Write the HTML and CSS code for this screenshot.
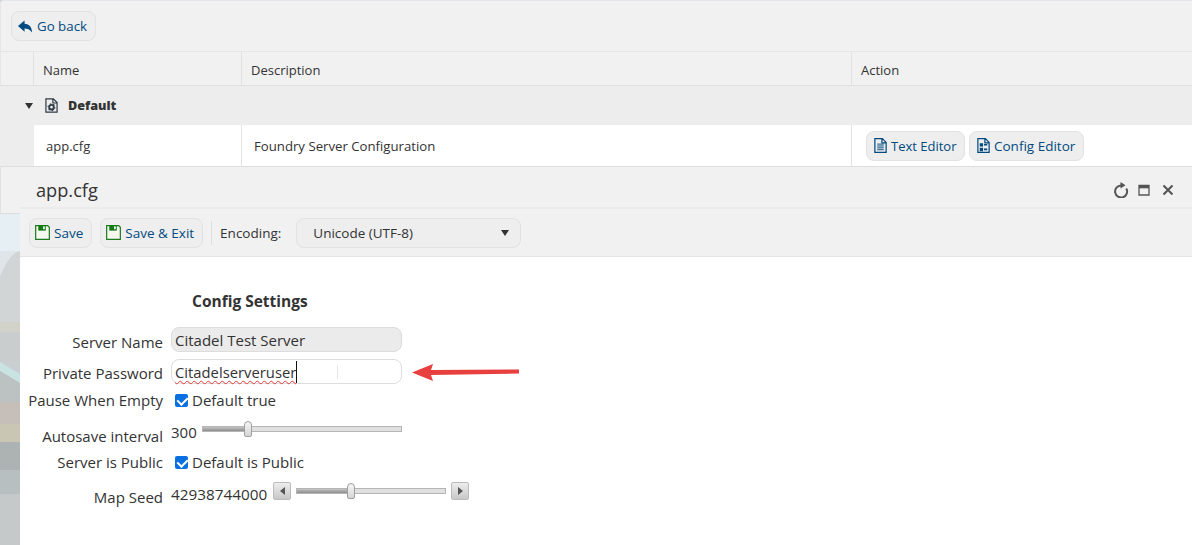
FILE: index.html
```html
<!DOCTYPE html>
<html lang="en">
<head>
<meta charset="utf-8">
<title>app.cfg</title>
<link rel="stylesheet" href="styles.css">
</head>
<body>
<div class="backdrop">
  <svg class="scene" viewBox="0 0 20 378" preserveAspectRatio="none" aria-hidden="true">
    <rect width="20" height="378" fill="#c9ced1"/>
    <rect y="0" width="20" height="46" fill="#f1f1f1"/>
    <rect y="46" width="20" height="1" fill="#dcdcdc"/>
    <rect y="47" width="20" height="37" fill="#e6eff4"/>
    <path d="M0 84V110Q10 86 20 84z" fill="#dfe5e8"/>
    <path d="M0 110Q10 86 20 84V155H0z" fill="#d2d5d6"/>
    <rect y="155" width="20" height="10" fill="#d3d2ca"/>
    <rect y="165" width="20" height="30" fill="#c9cdcd"/>
    <path d="M0 195 20 207V216L0 204z" fill="#c9e2e2"/>
    <path d="M0 204 20 216V235H0z" fill="#bcc2c2"/>
    <rect y="235" width="20" height="22" fill="#c6bfb9"/>
    <rect y="257" width="20" height="18" fill="#c9c6b4"/>
    <rect y="275" width="20" height="28" fill="#adb3b3"/>
    <rect y="303" width="20" height="24" fill="#b8bfc0"/>
    <rect y="327" width="20" height="51" fill="#c5c9c9"/>
    <rect x="0" y="0" width="1" height="46" fill="#e2e2e2"/>
  </svg>
</div>
<div class="page">
  <section class="list">
    <div class="topbar">
      <button class="btn back">
        <svg class="ico" viewBox="0 0 16 16"><path d="M7 1.500 0 7.500 7 13.500V10c3 0 5.600 .8 8 4.500C15 8.500 12 5.200 7 5z" fill="#004a7f"/></svg>
        Go back
      </button>
    </div>
    <div class="row head">
      <div class="c-gut"></div>
      <div class="c-name">Name</div>
      <div class="c-desc">Description</div>
      <div class="c-act">Action</div>
    </div>
    <div class="group">
      <span class="tri"></span>
      <svg class="ico file" viewBox="0 0 14 16"><path d="M1 .8h8l4 4v10.400H1zM8.500 .8v4.500H13" fill="none" stroke="#2f3b46" stroke-width="1.300"/><circle cx="7" cy="9.800" r="2.500" fill="none" stroke="#2f3b46" stroke-width="2"/><circle cx="7" cy="9.800" r="3.700" fill="none" stroke="#2f3b46" stroke-width="1.100" stroke-dasharray="1.500 2.300"/></svg>
      <b>Default</b>
    </div>
    <div class="row item">
      <div class="c-gut"></div>
      <div class="c-name in">app.cfg</div>
      <div class="c-desc in">Foundry Server Configuration</div>
      <div class="c-act btns">
        <button class="btn btn-text">
          <svg class="ico" viewBox="0 0 14 16"><path d="M1 .7h8l4 4v10.600H1zM8.500 .7v4.500H13" fill="none" stroke="#004a7f" stroke-width="1.300"/><path d="M3.500 6.500h7M3.500 8.500h7M3.500 10.500h7M3.500 12.500h7" stroke="#004a7f"/></svg>
          Text Editor
        </button>
        <button class="btn btn-cfg">
          <svg class="ico" viewBox="0 0 14 16"><path d="M1 .7h8l4 4v10.600H1zM8.500 .7v4.500H13" fill="none" stroke="#004a7f" stroke-width="1.300"/><path d="M3 5.500h3.500v3.500H3zM3 10.500h3.500V14H3z" fill="#004a7f"/><path d="M7.500 7.200h3.500M7.500 12.200h3.500" stroke="#004a7f" stroke-width="1.800"/></svg>
          Config Editor
        </button>
      </div>
    </div>
  </section>

  <section class="win">
    <header class="win-title">
      <span class="win-name">app.cfg</span>
      <div class="win-ctl">
        <svg class="ctl refresh" viewBox="0 0 16 16"><path d="M13.300 6.500A6 6 0 1 1 8 3.500" fill="none" stroke="#555" stroke-width="2"/><path d="M7.500 0 12.500 3.300 7.500 6.600z" fill="#555"/></svg>
        <svg class="ctl small" viewBox="0 0 12 12"><path d="M1 1.500h10v9.500H1z" fill="none" stroke="#555" stroke-width="1.300"/><path d="M1 3h10" stroke="#555" stroke-width="2.600"/></svg>
        <svg class="ctl small" viewBox="0 0 12 12"><path d="M1.500 1.500l9 9M10.500 1.500l-9 9" stroke="#555" stroke-width="2.100"/></svg>
      </div>
    </header>
    <div class="toolbar">
      <button class="btn tb">
        <svg class="ico" viewBox="0 0 16 16"><path d="M.7 .7h12.800l1.800 1.800v12.800H.7z" fill="#f4f8ee" stroke="#1f7a1f" stroke-width="1.300"/><path d="M3.500 .5h8v5.500h-8z" fill="#127a12"/><rect x="8.500" y="1.500" width="2" height="3" fill="#dfe"/></svg>
        Save
      </button>
      <button class="btn tb">
        <svg class="ico" viewBox="0 0 16 16"><path d="M.7 .7h12.800l1.800 1.800v12.800H.7z" fill="#f4f8ee" stroke="#1f7a1f" stroke-width="1.300"/><path d="M3.500 .5h8v5.500h-8z" fill="#127a12"/><rect x="8.500" y="1.500" width="2" height="3" fill="#dfe"/></svg>
        Save &amp; Exit
      </button>
      <span class="sep"></span>
      <span class="enc-label">Encoding:</span>
      <div class="select"><span>Unicode (UTF-8)</span><i class="tri"></i></div>
    </div>
    <div class="body">
      <h3>Config Settings</h3>
      <div class="form">
        <div class="f r1"><label>Server Name</label><div class="input ro">Citadel Test Server</div></div>
        <div class="f r2">
          <label>Private Password</label>
          <div class="input focus"><span class="typed">Citadelserveruser</span><i class="ibeam"></i></div>
          <svg class="arrow" viewBox="0 0 108 18"><path d="M0 9.500 21 1 19 7 107 6.500V10.500L19 12 21 18z" fill="#e8403f"/></svg>
        </div>
        <div class="f r3"><label>Pause When Empty</label><span class="chk"></span><span>Default true</span></div>
        <div class="f r4"><label>Autosave interval</label><span class="val">300</span><div class="slider s1"><i class="fill"></i><i class="thumb"></i></div></div>
        <div class="f r5"><label>Server is Public</label><span class="chk"></span><span>Default is Public</span></div>
        <div class="f r6"><label>Map Seed</label><span class="val num">42938744000</span>
          <span class="step"><i class="l"></i></span>
          <div class="slider s2"><i class="fill"></i><i class="thumb"></i></div>
          <span class="step"><i class="r"></i></span>
        </div>
      </div>
    </div>
  </section>
</div>
</body>
</html>
```

FILE: styles.css
```css
* { box-sizing: border-box; }
html, body { margin: 0; height: 100%; }
body {
  width: 1192px; height: 545px; overflow: hidden; position: relative;
  font-family: "Open Sans", "Noto Sans", sans-serif;
  font-size: 13px; color: #333; background: #cdd2d5;
}
.backdrop { position: absolute; left: 0; top: 167px; width: 20px; height: 378px; }
.scene { width: 100%; height: 100%; display: block; }
.page { position: relative; display: flex; flex-direction: column; height: 545px; }
.list {
  height: 167px; background: #f1f1f1; border-top: 1px solid #e3e6ea; border-left: 1px solid #e6e6e6;
  border-bottom: 1px solid #dedede; border-radius: 4px 0 0 0;
}
.topbar { height: 51px; padding: 10px 0 0 10px; border-bottom: 1px solid #e6e6e6; }
.btn {
  display: inline-flex; align-items: center; gap: 3px; height: 30px; padding: 0 0 0 6px;
  font: inherit; font-size: 13.300px; color: #004a7f; background: #eee;
  border: 1px solid #e2e2e2; border-radius: 8px; white-space: nowrap;
}
.back { width: 85px; gap: 4px; }
.btn-text { width: 99px; font-size: 13px; }
.btn-cfg { width: 115px; font-size: 13.500px; }
.ico { width: 15px; height: 15px; flex: none; }
.row { display: flex; }
.head { height: 34px; border-bottom: 1px solid #e0e0e0; align-items: stretch; margin-left: -1px; }
.head > div { display: flex; align-items: center; padding: 3px 0 0 9px; border-right: 1px solid #e3e3e3; }
.head > .c-act { border-right: 0; }
.c-gut { width: 34px; flex: none; padding: 0 !important; }
.c-name { width: 208px; flex: none; }
.c-desc { width: 610px; flex: none; }
.c-act { flex: 1; }
.group {
  height: 39px; background: #ededed; display: flex; align-items: center; padding: 0 0 0 25px;
  font-size: 12.600px; font-weight: 700; color: #333; margin-left: -1px;
}
.group .tri { margin-right: 12px; }
.group .file { width: 13px; height: 15px; margin-right: 10px; }
.tri { display: inline-block; width: 0; height: 0; border: 4px solid transparent; border-top: 6px solid #333; border-bottom: 0; }
.item { height: 41px; margin-left: -1px; }
.item .c-gut { background: #ededed; }
.item > div:not(.c-gut) { background: #fff; display: flex; align-items: center; }
.c-name.in { padding-left: 12px; border-right: 1px solid #e3e3e3; }
.c-desc.in { padding-left: 12px; border-right: 1px solid #e3e3e3; font-size: 13.200px; }
.btns { gap: 4px; padding-left: 14px; }

.win {
  flex: 1; margin-left: 20px; background: #fff; display: flex; flex-direction: column;
}
.win-title {
  height: 42px; background: #f1f1f1; display: flex; align-items: center; justify-content: space-between;
  padding: 5px 18px 0 16px; border-bottom: 2px solid #ebebeb;
}
.win-name { font-size: 18.200px; color: #333; }
.win-ctl { display: flex; align-items: center; gap: 12px; margin-top: 1px; }
.ctl { width: 16px; height: 16px; }
.ctl.refresh { margin-right: -3px; }
.ctl.small { width: 12px; height: 12px; }
.toolbar {
  height: 48px; background: #f1f1f1; border-bottom: 1px solid #e4e4e4;
  display: flex; align-items: center; padding: 0 0 0 9px; gap: 8px; font-size: 13.500px;
}
.btn.tb { padding: 0 8px 0 5px; gap: 4px; font-size: 13.500px; }
.sep { width: 1px; height: 24px; background: #dfdfdf; }
.enc-label { margin-right: 7px; }
.select {
  width: 225px; height: 30px; display: flex; align-items: center; justify-content: space-between;
  padding: 0 11px 0 16px; background: #eee; border: 1px solid #e2e2e2; border-radius: 8px;
}
.body { flex: 1; padding-top: 34px; font-size: 15px; }
h3 { margin: 0 0 0 172px; font-size: 15.500px; font-weight: 700; line-height: 20px; color: #333; }
.form { margin-top: 16px; }
.f { display: flex; align-items: flex-start; }
.f label { width: 143px; flex: none; text-align: right; margin-right: 8px; line-height: 20px; }
.f > span { line-height: 20px; }
.r1 { height: 32px; }
.r2 { height: 31px; position: relative; }
.r3, .r4, .r5, .r6 { height: 31px; }
.r1 label { padding-top: 5px; }
.r2 label { padding-top: 4px; }
.r4 label { padding-top: 5px; }
.r6 label { padding-top: 4px; }
.val { margin-top: 1px; }
.num { font-size: 15.300px; }
.input {
  width: 231px; height: 25px; border: 1px solid #ddd; border-radius: 8px; padding: 0 3px;
  line-height: 24px; background: #fff; position: relative;
}
.input.ro { background: #ebebeb; }
.typed {
  display: inline-block; height: 22px; line-height: 22px; border-right: 1px solid #111; font-size: 14.800px;
  text-decoration: underline wavy #e23b3b 1px; text-underline-offset: 2px;
}
.ibeam { position: absolute; left: 165px; top: 5px; width: 1px; height: 14px; background: #e6e6e6; }
.arrow { position: absolute; left: 392px; top: 4px; width: 108px; height: 18px; }
.chk {
  width: 13px; height: 13px; margin: 4px 4px 0 4px; border-radius: 2px; background: #0a6fe0; position: relative; flex: none;
}
.chk::after {
  content: ""; position: absolute; left: 4px; top: 1px; width: 5px; height: 8px;
  border: solid #fff; border-width: 0 2px 2px 0; transform: rotate(45deg);
}
.slider {
  position: relative; height: 6px; margin-left: 5px; background: #e0e0e0;
  border: 1px solid #b5b5b5;
}
.r4 .slider { margin-top: 5px; }
.s1 { width: 200px; }
.s2 { width: 150px; margin: 5px 5px 0 5px; }
.fill { position: absolute; left: 0; top: 0; bottom: 0; background: linear-gradient(#c4c4c4, #8d8d8d); }
.s1 .fill { width: 45px; } .s2 .fill { width: 54px; }
.thumb {
  position: absolute; top: -6px; width: 8px; height: 16px; background: linear-gradient(#f5f5f5, #d5d5d5);
  border: 1px solid #a0a0a0; border-radius: 4px 4px 2px 2px;
}
.s1 .thumb { left: 41px; } .s2 .thumb { left: 50px; }
.step {
  width: 18px; height: 18px; margin: -1px 0 0 6px; background: linear-gradient(#ededed, #c8c8c8);
  border: 1px solid #bbb; border-radius: 2px; display: flex; align-items: center; justify-content: center; flex: none;
}
.r6 .step:last-child { margin-left: 0; }
.step i { width: 0; height: 0; border: 4px solid transparent; }
.step .l { border-right: 5px solid #555; border-left: 0; }
.step .r { border-left: 5px solid #555; border-right: 0; }
```
